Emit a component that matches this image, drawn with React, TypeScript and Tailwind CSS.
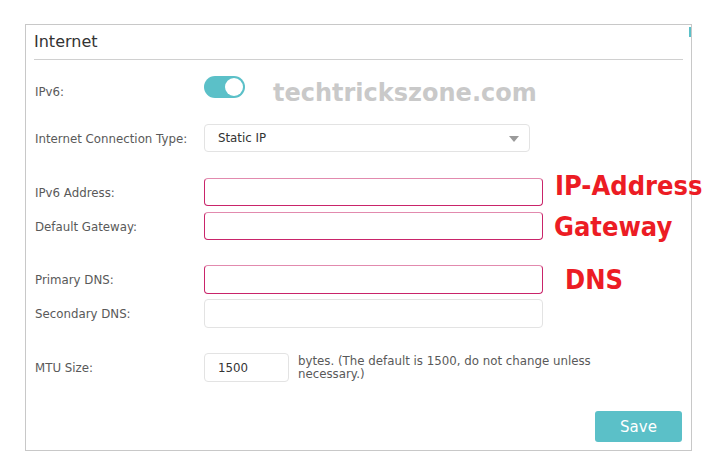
import React from 'react'

const font = { fontFamily: '"DejaVu Sans", Verdana, sans-serif' }

type RowProps = {
  label: string
  className?: string
  children?: React.ReactNode
}

const Row: React.FC<RowProps> = ({ label, className = '', children }) => {
  return (
    <div className={`flex items-center ${className}`}>
      <div className="w-[170px] shrink-0 pl-[1px] pt-[3px] text-[11.8px] text-[#595959]">{label}</div>
      {children}
    </div>
  )
}

const Note: React.FC<{ text: string; className: string }> = ({ text, className }) => (
  <span
    className={`self-start whitespace-nowrap text-[27px] font-bold leading-none text-[#ec1c24] ${className}`}
    style={{ fontFamily: '"DejaVu Sans Condensed", "DejaVu Sans", sans-serif', fontStretch: 'condensed' }}
  >
    {text}
  </span>
)

const App: React.FC = () => {
  const redInput =
    'h-[28px] w-[339px] shrink-0 rounded-[4px] border border-[#c9246a] border-t-[#e28aae] bg-white'
  const greyInput = 'h-[29px] w-[339px] shrink-0 rounded-[4px] border border-[#e3e3e3] bg-white'

  return (
    <div className="h-[461px] w-[726px] overflow-hidden bg-white" style={font}>
      <div className="relative ml-[25px] mt-[24px] flex h-[427px] w-[667px] flex-col border border-[#c8c8c8] px-[8px]">
        {/* scroll mark */}
        <div className="absolute right-0 top-[2px] h-[10px] w-[2px] bg-[#5bc0c8]" />

        {/* title */}
        <div className="flex h-[35px] items-center border-b border-[#d0d0d0] text-[16px] text-[#333]">
          Internet
        </div>

        {/* IPv6 toggle */}
        <Row label="IPv6:" className="mt-[16px] h-[30px]">
          <div className="flex h-[22px] w-[41px] shrink-0 items-center justify-end self-start rounded-full bg-[#5bc0c8] pr-[2px]">
            <div className="h-[18px] w-[18px] rounded-full bg-white" />
          </div>
          <span className="ml-[28px] mt-[4px] text-[24px] font-bold leading-none text-[#c9c9c9]">
            techtrickszone.com
          </span>
        </Row>

        {/* connection type */}
        <Row label="Internet Connection Type:" className="mt-[18px] h-[28px]">
          <div className="flex h-[28px] w-[326px] shrink-0 items-center justify-between rounded-[4px] border border-[#e3e3e3] pl-[13px] pr-[10px] pt-[2px] text-[11.8px] text-[#333]">
            <span>Static IP</span>
            <svg width="10" height="6" viewBox="0 0 10 6">
              <path d="M0 0 L10 0 L5 6 Z" fill="#9a9a9a" />
            </svg>
          </div>
        </Row>

        <Row label="IPv6 Address:" className="mt-[26px] h-[28px]">
          <div className={redInput} />
          <Note text="IP-Address" className="ml-[12px] mt-[-6px]" />
        </Row>

        <Row label="Default Gateway:" className="mt-[6px] h-[28px]">
          <div className={redInput} />
          <Note text="Gateway" className="ml-[11px] mt-[1px]" />
        </Row>

        <Row label="Primary DNS:" className="mt-[25px] h-[29px]">
          <div className="h-[29px] w-[339px] shrink-0 rounded-[4px] border border-[#c9246a] border-t-[#e28aae] bg-white" />
          <Note text="DNS" className="ml-[22px] mt-[1px]" />
        </Row>

        <Row label="Secondary DNS:" className="mt-[5px] h-[29px]">
          <div className={greyInput} />
        </Row>

        {/* MTU */}
        <Row label="MTU Size:" className="mt-[25px] h-[29px]">
          <div className="flex h-[29px] w-[85px] shrink-0 items-center rounded-[4px] border border-[#e3e3e3] pl-[13px] pt-[2px] text-[11.8px] text-[#333]">
            1500
          </div>
          <div className="ml-[9px] mt-[2px] w-[300px] self-start text-[11.8px] leading-[13px] text-[#595959]">
            bytes. (The default is 1500, do not change unless necessary.)
          </div>
        </Row>

        <div className="mt-[29px] flex justify-end pr-[1px]">
          <button className="h-[31px] w-[87px] rounded-[3px] bg-[#5bc0c8] pt-[1px] text-[15px] text-white">
            Save
          </button>
        </div>
      </div>
    </div>
  )
}

export default App
